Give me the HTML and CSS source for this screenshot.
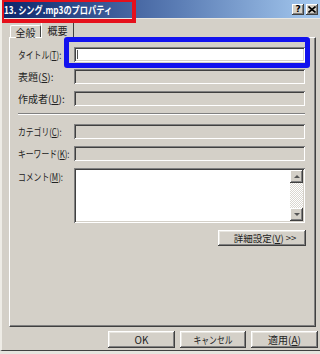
FILE: index.html
```html
<!DOCTYPE html>
<html lang="ja">
<head>
    <meta charset="UTF-8">
    <title>13. シング.mp3のプロパティ</title>
    <link rel="stylesheet" href="styles.css">
</head>
<body>
<div class="window">
    <div class="titlebar">
        <span class="title">13. シング.mp3のプロパティ</span>
        <div class="caption-btns">
            <span class="cap-btn">?</span>
            <span class="cap-btn">
                <svg width="8" height="7" viewBox="0 0 8 7"><path d="M0.5 0.5 L7.5 6.5 M7.5 0.5 L0.5 6.5" stroke="#000" stroke-width="1.6"/></svg>
            </span>
        </div>
    </div>

    <div class="tabs">
        <span class="tab">全般</span>
        <span class="tab active">概要</span>
    </div>

    <div class="panel">
        <div class="row">
            <span class="label"><span class="narrow">タイトル(<u>T</u>):</span></span>
            <div class="field edit"><span class="caret"></span></div>
        </div>
        <div class="row">
            <span class="label">表題(<u>S</u>):</span>
            <div class="field"></div>
        </div>
        <div class="row">
            <span class="label">作成者(<u>U</u>):</span>
            <div class="field"></div>
        </div>
        <div class="sep"></div>
        <div class="row">
            <span class="label"><span class="narrow">カテゴリ(<u>C</u>):</span></span>
            <div class="field"></div>
        </div>
        <div class="row">
            <span class="label"><span class="narrow">キーワード(<u>K</u>):</span></span>
            <div class="field"></div>
        </div>
        <div class="row comment">
            <span class="label"><span class="narrow">コメント(<u>M</u>):</span></span>
            <div class="field memo">
                <div class="scrollbar">
                    <span class="sb-btn"><i class="arrow up"></i></span>
                    <span class="sb-track"></span>
                    <span class="sb-btn"><i class="arrow down"></i></span>
                </div>
            </div>
        </div>
        <div class="adv-line">
            <button type="button" class="btn adv">詳細設定(<u>V</u>) &gt;&gt;</button>
        </div>
    </div>

    <div class="buttons">
        <button type="button" class="btn">OK</button>
        <button type="button" class="btn cancel"><span class="narrow">キャンセル</span></button>
        <button type="button" class="btn">適用(<u>A</u>)</button>
    </div>

    <!-- 注釈の枠 -->
    <div class="mark red"></div>
    <div class="mark blue"></div>
</div>
</body>
</html>
```

FILE: styles.css
```css
body {
    margin: 0;
    background: #e6e4de;
    font-family: "Noto Sans CJK JP", "Noto Sans", sans-serif;
    font-size: 10px;
    color: #000;
}

.window {
    position: relative;
    width: 320px;
    height: 351px;
    background: #d4d0c8;
    border-left: 2px solid #eeece6;
    border-bottom: 1px solid #404040;
    box-sizing: border-box;
    overflow: hidden;
}

/* カナが幅広くなるので横に詰める */
.narrow {
    display: inline-block;
    transform: scaleX(0.78);
    transform-origin: left center;
    white-space: nowrap;
}

/* タイトルバー */
.titlebar {
    display: flex;
    align-items: center;
    justify-content: space-between;
    height: 19px;
    margin-left: -2px;
    padding-left: 4px;
    background: linear-gradient(to right, #0a246a, #5a7cb4 55%, #a6caf0);
    border-bottom: 1px solid #eae8e2;
    box-sizing: border-box;
}
.title {
    display: inline-block;
    color: #fff;
    font-weight: bold;
    font-size: 10.5px;
    white-space: nowrap;
    transform: scaleX(0.78);
    transform-origin: left center;
}
.caption-btns {
    display: flex;
    gap: 2px;
    margin-right: 2px;
}
.cap-btn {
    display: flex;
    align-items: center;
    justify-content: center;
    width: 12px;
    height: 11px;
    background: #d4d0c8;
    box-shadow: inset -1px -1px #404040, inset 1px 1px #fff, inset -2px -2px #808080;
    font-family: "DejaVu Sans", sans-serif;
    font-weight: bold;
    font-size: 9px;
    line-height: 1;
}

/* タブ */
.tabs {
    display: flex;
    align-items: flex-end;
    height: 16px;
    margin-top: 2px;
    padding-left: 8px;
}
.tab {
    display: flex;
    justify-content: center;
    width: 31px;
    height: 12px;
    padding-top: 1px;
    background: #d4d0c8;
    border-top: 1px solid #fff;
    border-left: 1px solid #fff;
    border-right: 1px solid #404040;
    border-radius: 2px 2px 0 0;
    box-sizing: border-box;
    color: #222;
    line-height: 11px;
}
.tab.active {
    position: relative;
    width: 33px;
    height: 17px;
    margin-bottom: -1px;
    padding-top: 3px;
}

.panel {
    width: 307px;
    height: 290px;
    margin-left: 7px;
    padding: 9px 10px 0 8px;
    border-top: 1px solid #fff;
    border-left: 1px solid #fff;
    border-right: 1px solid #404040;
    border-bottom: 1px solid #404040;
    box-shadow: inset -1px -1px #808080;
    box-sizing: border-box;
}

.row {
    display: flex;
    align-items: center;
    height: 15px;
    margin-bottom: 7px;
}
.label {
    width: 56px;
    flex: none;
    color: #222;
    white-space: nowrap;
}
.field {
    flex: 1;
    height: 15px;
    background: #d4d0c8;
    box-shadow: inset 1px 1px #808080, inset -1px -1px #fff, inset 2px 2px #404040, inset -2px -2px #d4d0c8;
}
.field.edit {
    display: flex;
    align-items: center;
    background: #fff;
}
.caret {
    width: 1px;
    height: 9px;
    margin-left: 3px;
    background: #555;
}

.sep {
    height: 0;
    margin-bottom: 9px;
    border-top: 1px solid #808080;
    border-bottom: 1px solid #fff;
}

.row.comment {
    align-items: flex-start;
    height: 55px;
}
.row.comment .label {
    padding-top: 1px;
}
.field.memo {
    display: flex;
    justify-content: flex-end;
    height: 55px;
    padding: 2px;
    background: #fff;
    box-sizing: border-box;
}
.scrollbar {
    display: flex;
    flex-direction: column;
    width: 13px;
}
.sb-btn {
    display: flex;
    align-items: center;
    justify-content: center;
    height: 13px;
    background: #d4d0c8;
    box-shadow: inset -1px -1px #404040, inset 1px 1px #fff, inset -2px -2px #808080;
}
.sb-track {
    flex: 1;
    background: repeating-conic-gradient(#fff 0 25%, #d4d0c8 0 50%) 0 0 / 2px 2px;
    opacity: 0.85;
}
.arrow {
    width: 0;
    height: 0;
    border-left: 3px solid transparent;
    border-right: 3px solid transparent;
}
.arrow.up {
    border-bottom: 3px solid #555;
}
.arrow.down {
    border-top: 3px solid #555;
}

.adv-line {
    display: flex;
    justify-content: flex-end;
    margin-top: 7px;
    margin-right: -1px;
}

/* ボタン */
.btn {
    height: 17px;
    padding: 0;
    font-family: inherit;
    font-size: 10px;
    color: #222;
    background: #d4d0c8;
    border: none;
    box-shadow: inset -1px -1px #404040, inset 1px 1px #fff, inset -2px -2px #808080, inset 2px 2px #e8e6e0;
}
.btn.adv {
    width: 88px;
    height: 16px;
    padding-left: 6px;
    font-size: 9.5px;
}
.btn .narrow {
    transform-origin: center;
}

.buttons {
    display: flex;
    justify-content: flex-end;
    gap: 5px;
    margin-top: 4px;
    padding-right: 2px;
}
.buttons .btn {
    width: 67px;
}
.buttons .btn.cancel {
    width: 66px;
}

/* 赤と青の囲み */
.mark {
    position: absolute;
    box-sizing: border-box;
}
.mark.red {
    left: -2px;
    top: -2px;
    width: 136px;
    height: 25px;
    border: 4px solid #e5101c;
}
.mark.blue {
    left: 62px;
    top: 37px;
    width: 246px;
    height: 31px;
    border: 5px solid #1212ee;
    border-radius: 3px;
}
```
